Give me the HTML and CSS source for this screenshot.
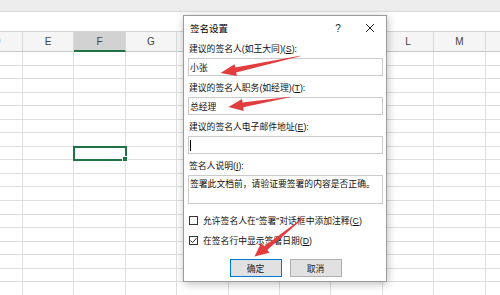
FILE: index.html
```html
<!DOCTYPE html>
<html lang="zh-CN">
<head>
    <meta charset="UTF-8">
    <meta name="viewport" content="width=device-width, initial-scale=1.0">
    <title>签名设置</title>
    <link rel="stylesheet" href="styles.css">
</head>
<body>
    <div class="ribbon"></div>
    <div class="formula-bar"></div>
    <div class="sheet" id="sheet"></div>

    <div class="dialog">
        <div class="dialog-title">
            <span>签名设置</span>
            <div class="title-buttons">
                <span class="title-btn">?</span>
                <span class="title-btn">
                    <svg width="10" height="10" viewBox="0 0 10 10"><path d="M1 1 L9 9 M9 1 L1 9" stroke="#222" stroke-width="1" fill="none"/></svg>
                </span>
            </div>
        </div>
        <div class="dialog-body">
            <div class="field">
                <div class="field-label">建议的签名人(如王大同)(<u>S</u>):</div>
                <div class="input">小张</div>
            </div>
            <div class="field">
                <div class="field-label">建议的签名人职务(如经理)(<u>T</u>):</div>
                <div class="input">总经理</div>
            </div>
            <div class="field">
                <div class="field-label">建议的签名人电子邮件地址(<u>E</u>):</div>
                <div class="input"><span class="caret"></span></div>
            </div>
            <div class="field">
                <div class="field-label">签名人说明(<u>I</u>):</div>
                <div class="input textarea">签署此文档前，请验证要签署的内容是否正确。</div>
            </div>
            <div class="check first">
                <span class="box"></span>
                <span>允许签名人在“签署”对话框中添加注释(<u>C</u>)</span>
            </div>
            <div class="check">
                <span class="box">
                    <svg width="9" height="9" viewBox="0 0 9 9"><path d="M1.5 4.5 L3.6 6.6 L7.6 2" stroke="#333" stroke-width="1" fill="none"/></svg>
                </span>
                <span>在签名行中显示签署日期(<u>D</u>)</span>
            </div>
            <div class="buttons">
                <div class="btn primary">确定</div>
                <div class="btn">取消</div>
            </div>
        </div>
    </div>

    <svg class="marks" width="500" height="295" viewBox="0 0 500 295">
        <polygon points="299.9,55.7 235.3,67.6 234.5,64.2 220.5,73 237,76 236,72.4 300.1,56.3"/>
        <polygon points="290,96.7 242.5,102.6 242,99 228.5,107 243.8,111 243.2,107.2 290,97.3"/>
        <polygon points="303.2,218.2 267.2,250 269.5,252.8 254.5,256.5 261.2,242.8 264.3,246.2 302.8,217.8"/>
    </svg>

    <script>
        // Build the spreadsheet grid behind the dialog (hidden headers left blank)
        const cols = ['D', 'E', 'F', 'G', '', '', '', '', 'L', 'M', ''];
        const sheet = document.getElementById('sheet');
        cols.forEach((c, i) => {
            const head = document.createElement('div');
            head.className = 'head' + (i === 2 ? ' selected' : '');
            head.textContent = c;
            sheet.appendChild(head);
        });
        for (let r = 0; r < 18; r++) {
            cols.forEach((c, i) => {
                const cell = document.createElement('div');
                cell.className = 'cell' + (i === 2 && r === 7 ? ' active' : '');
                sheet.appendChild(cell);
            });
        }
    </script>
</body>
</html>
```

FILE: styles.css
```css
body {
    margin: 0;
    width: 500px;
    height: 295px;
    overflow: hidden;
    position: relative;
    background-color: #fff;
    font-family: "Noto Sans CJK SC", "Noto Sans", sans-serif;
    color: #000;
}
.ribbon {
    height: 11px;
    background-color: #ededed;
    border-bottom: 1px solid #dcdcdc;
}
.formula-bar {
    height: 19px;
    background-color: #fff;
    border-bottom: 1px solid #d4d4d4;
}
.sheet {
    display: grid;
    grid-template-columns: repeat(11, 51.4px);
    grid-template-rows: 20px;
    grid-auto-rows: 13.55px;
    margin-left: -28.4px;
}
.head {
    box-sizing: border-box;
    background-color: #f5f5f5;
    border-right: 1px solid #d9d9d9;
    border-bottom: 1px solid #c8c8c8;
    display: flex;
    align-items: center;
    justify-content: center;
    font: 10px "Liberation Sans", Arial, sans-serif;
    color: #444;
}
.head.selected {
    background-color: #d2d2d2;
    border-bottom: 2px solid #217346;
}
.cell {
    box-sizing: border-box;
    border-right: 1px solid #dedede;
    border-bottom: 1px solid #dedede;
}
.cell.active {
    position: relative;
    outline: 2px solid #217346;
    outline-offset: -1px;
    z-index: 1;
}
.cell.active::after {
    content: "";
    position: absolute;
    right: -3px;
    bottom: -3px;
    width: 4px;
    height: 4px;
    background-color: #217346;
    border: 1px solid #fff;
}

/* dialog window */
.dialog {
    position: absolute;
    left: 183px;
    top: 15px;
    width: 204px;
    height: 267px;
    box-sizing: border-box;
    background-color: #fff;
    border: 1px solid #9b9b9b;
    box-shadow: 1px 2px 8px rgba(0,0,0,0.25);
    font-family: "Liberation Sans", "Noto Sans CJK SC", sans-serif;
    font-size: 8.8px;
    z-index: 5;
}
.dialog-title {
    height: 20px;
    box-sizing: border-box;
    padding-top: 4px;
    display: flex;
    align-items: center;
    padding-left: 6px;
    font-size: 9.5px;
}
.title-buttons {
    margin-left: auto;
    display: flex;
}
.title-btn {
    width: 32px;
    height: 16px;
    display: flex;
    align-items: center;
    justify-content: center;
    font: 10px "Liberation Sans", Arial, sans-serif;
    color: #222;
}
.dialog-body {
    padding: 6px 3px 0 4px;
}
.field {
    margin-bottom: 5px;
}
.field-label {
    line-height: 14px;
    padding-left: 1px;
    color: #111;
}
.input {
    margin-top: 2px;
    height: 18px;
    box-sizing: border-box;
    border: 1px solid #cacaca;
    padding: 0 1px;
    display: flex;
    align-items: center;
    color: #111;
}
.input.textarea {
    height: 29px;
    align-items: flex-start;
    line-height: 14px;
    padding-top: 1px;
}
.caret {
    width: 1px;
    height: 11px;
    background-color: #000;
}
.check {
    display: flex;
    align-items: center;
    gap: 5px;
    height: 14px;
    margin-top: 6px;
    padding-left: 1px;
    color: #111;
}
.check.first {
    margin-top: 9px;
}
.box {
    width: 9px;
    height: 9px;
    box-sizing: border-box;
    border: 1px solid #333;
    background-color: #fff;
    display: flex;
    align-items: center;
    justify-content: center;
}
.box svg {
    flex: none;
}
.buttons {
    display: flex;
    justify-content: center;
    gap: 8px;
    margin-top: 12px;
}
.btn {
    width: 52px;
    height: 18px;
    box-sizing: border-box;
    background-color: #e1e1e1;
    border: 1px solid #adadad;
    display: flex;
    align-items: center;
    justify-content: center;
    color: #222;
}
.btn.primary {
    border-color: #0078d7;
}
.marks {
    position: absolute;
    left: 0;
    top: 0;
    z-index: 10;
    pointer-events: none;
    fill: #e23c3f;
}
```
